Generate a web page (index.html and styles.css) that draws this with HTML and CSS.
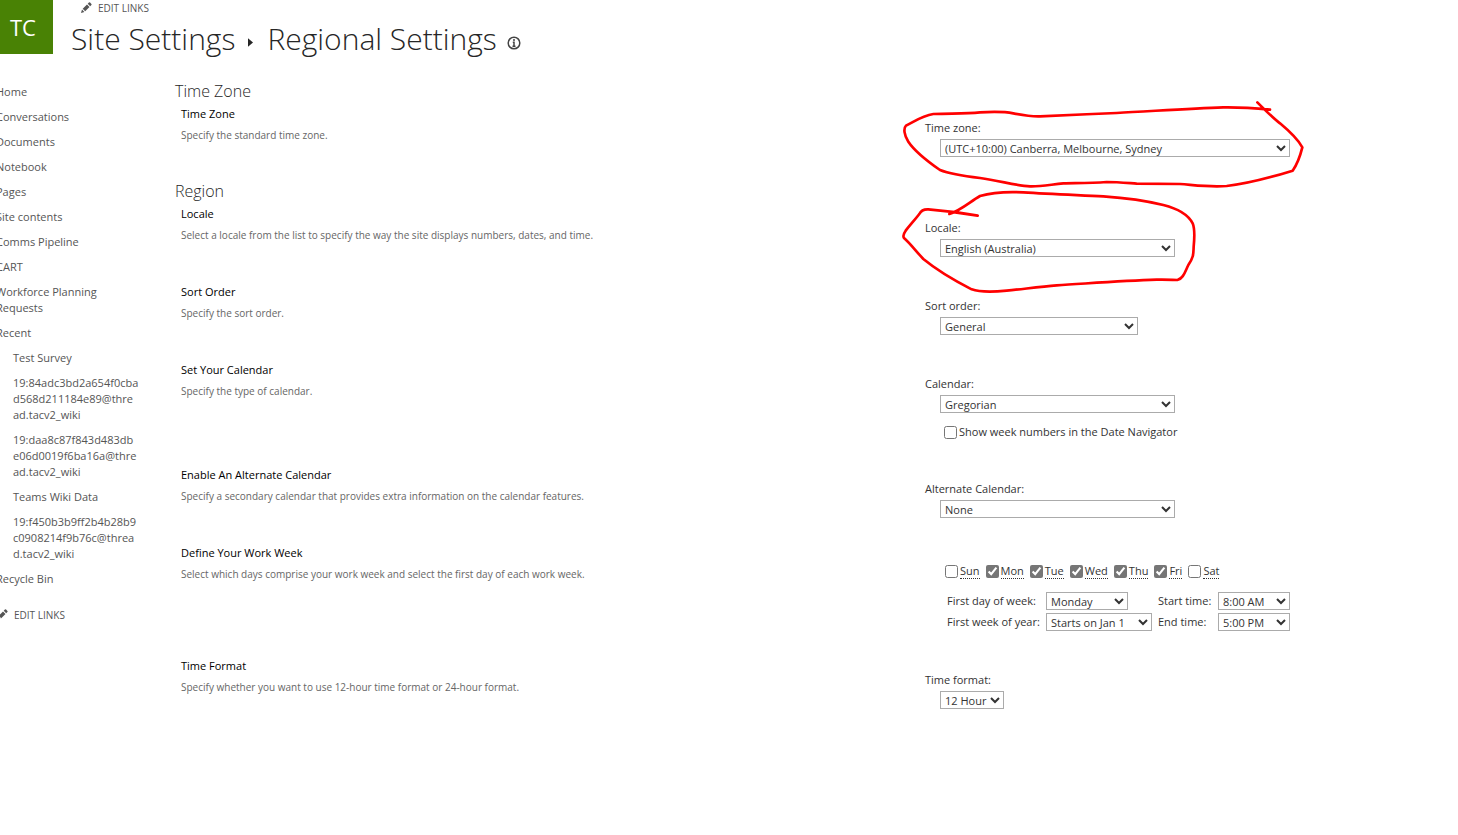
FILE: index.html
```html
<!DOCTYPE html>
<html lang="en">
<head>
    <meta charset="UTF-8">
    <meta name="viewport" content="width=device-width, initial-scale=1.0">
    <title>Regional Settings</title>
    <link rel="stylesheet" href="styles.css">
</head>
<body>
    <header class="header">
        <a class="site-logo" href="#">TC</a>
        <div class="header-text">
            <a class="edit-links" href="#">
                <svg class="pencil" viewBox="0 0 12 12"><path d="M1 11l1-3.400 2.400 2.400zM2.700 6.800L7 2.500l2.500 2.500-4.300 4.300zM7.700 1.800L8.900.6q.6-.5 1.200 0l1.300 1.300q.5.6 0 1.200l-1.200 1.200z"/></svg>
                EDIT LINKS
            </a>
            <h1 class="page-title">
                <a href="#">Site Settings</a>
                <svg class="arrow" viewBox="0 0 6 10"><path d="M0 0l6 5-6 5z"/></svg>
                <span>Regional Settings</span>
                <svg class="info" viewBox="0 0 14 14"><circle cx="7" cy="7" r="5.800"/><path d="M7 3v2M5.800 6.300H7V10M5.500 10.200h3"/></svg>
            </h1>
        </div>
    </header>

    <div class="page">
        <nav class="sidebar">
            <ul class="nav-list">
                <li><a href="#">Home</a></li>
                <li><a href="#">Conversations</a></li>
                <li><a href="#">Documents</a></li>
                <li><a href="#">Notebook</a></li>
                <li><a href="#">Pages</a></li>
                <li><a href="#">Site contents</a></li>
                <li><a href="#">Comms Pipeline</a></li>
                <li><a href="#">CART</a></li>
                <li><a href="#">Workforce Planning<br>Requests</a></li>
                <li>
                    <a href="#">Recent</a>
                    <ul class="nav-list sub-list">
                        <li><a href="#">Test Survey</a></li>
                        <li><a href="#">19:84adc3bd2a654f0cba<br>d568d211184e89@thre<br>ad.tacv2_wiki</a></li>
                        <li><a href="#">19:daa8c87f843d483db<br>e06d0019f6ba16a@thre<br>ad.tacv2_wiki</a></li>
                        <li><a href="#">Teams Wiki Data</a></li>
                        <li><a href="#">19:f450b3b9ff2b4b28b9<br>c0908214f9b76c@threa<br>d.tacv2_wiki</a></li>
                    </ul>
                </li>
                <li><a href="#">Recycle Bin</a></li>
            </ul>
            <a class="edit-links" href="#">
                <svg class="pencil" viewBox="0 0 12 12"><path d="M1 11l1-3.400 2.400 2.400zM2.700 6.800L7 2.500l2.500 2.500-4.300 4.300zM7.700 1.800L8.900.6q.6-.5 1.200 0l1.300 1.300q.5.6 0 1.200l-1.200 1.200z"/></svg>
                EDIT LINKS
            </a>
        </nav>

        <main class="settings">
            <h2 class="section-title">Time Zone</h2>
            <section class="row">
                <div class="info-cell">
                    <h3>Time Zone</h3>
                    <p>Specify the standard time zone.</p>
                </div>
                <div class="control-cell">
                    <label for="time-zone">Time zone:</label>
                    <select id="time-zone" class="select wide"><option>(UTC+10:00) Canberra, Melbourne, Sydney</option></select>
                    <svg class="mark mark-zone" viewBox="30 24 1230 285"><path d="M1102 37C1130 65 1150 85 1170 100C1200 125 1222 145 1237 172C1230 200 1220 225 1208 242C1150 260 1080 280 1010 288C960 292 920 286 870 282L740 281C700 278 680 276 650 276C600 280 560 279 520 280C480 284 450 290 420 289C380 288 330 272 270 264C220 258 180 252 150 240C110 212 75 185 55 155C42 135 40 115 48 107C80 90 100 76 130 72C200 70 230 71 270 67C320 64 345 65 370 70C400 76 420 80 450 79C540 75 600 72 680 69C780 64 900 55 1000 52C1060 51 1100 55 1140 59"/></svg>
                </div>
            </section>

            <h2 class="section-title">Region</h2>
            <section class="row">
                <div class="info-cell">
                    <h3>Locale</h3>
                    <p>Select a locale from the list to specify the way the site displays numbers, dates, and time.</p>
                </div>
                <div class="control-cell">
                    <label for="locale">Locale:</label>
                    <select id="locale" class="select medium"><option>English (Australia)</option></select>
                    <svg class="mark mark-locale" viewBox="30 294 1230 330"><path d="M263 377C200 366 140 360 115 358C100 357 93 362 88 372C70 395 60 405 47 422C40 432 38 438 42 444C60 460 75 480 100 507C140 540 200 575 245 598C270 607 310 606 350 602C400 597 450 590 500 586C600 580 700 572 800 569C830 568 850 570 862 570C880 566 885 545 895 525C912 500 910 490 911 470C914 440 914 415 908 400C895 375 860 355 820 345C760 330 700 323 640 319C560 315 480 312 400 307C340 304 300 309 270 318C240 335 215 360 178 372"/></svg>
                </div>
            </section>

            <section class="row">
                <div class="info-cell">
                    <h3>Sort Order</h3>
                    <p>Specify the sort order.</p>
                </div>
                <div class="control-cell">
                    <label for="sort-order">Sort order:</label>
                    <select id="sort-order" class="select sort"><option>General</option></select>
                </div>
            </section>

            <section class="row">
                <div class="info-cell">
                    <h3>Set Your Calendar</h3>
                    <p>Specify the type of calendar.</p>
                </div>
                <div class="control-cell">
                    <label for="calendar">Calendar:</label>
                    <select id="calendar" class="select medium"><option>Gregorian</option></select>
                    <div class="check-line">
                        <input type="checkbox" id="week-numbers">
                        <label for="week-numbers">Show week numbers in the Date Navigator</label>
                    </div>
                </div>
            </section>

            <section class="row">
                <div class="info-cell">
                    <h3>Enable An Alternate Calendar</h3>
                    <p>Specify a secondary calendar that provides extra information on the calendar features.</p>
                </div>
                <div class="control-cell">
                    <label for="alternate">Alternate Calendar:</label>
                    <select id="alternate" class="select medium"><option>None</option></select>
                </div>
            </section>

            <section class="row work-week">
                <div class="info-cell">
                    <h3>Define Your Work Week</h3>
                    <p>Select which days comprise your work week and select the first day of each work week.</p>
                </div>
                <div class="control-cell">
                    <div class="days">
                        <span><input type="checkbox" id="sun"><label for="sun">Sun</label></span>
                        <span><input type="checkbox" id="mon" checked><label for="mon">Mon</label></span>
                        <span><input type="checkbox" id="tue" checked><label for="tue">Tue</label></span>
                        <span><input type="checkbox" id="wed" checked><label for="wed">Wed</label></span>
                        <span><input type="checkbox" id="thu" checked><label for="thu">Thu</label></span>
                        <span><input type="checkbox" id="fri" checked><label for="fri">Fri</label></span>
                        <span><input type="checkbox" id="sat"><label for="sat">Sat</label></span>
                    </div>
                    <div class="week-grid">
                        <label for="first-day">First day of week:</label>
                        <select id="first-day" class="select day"><option>Monday</option></select>
                        <label for="start-time">Start time:</label>
                        <select id="start-time" class="select"><option>8:00 AM</option></select>
                        <label for="first-week">First week of year:</label>
                        <select id="first-week" class="select year"><option>Starts on Jan 1</option></select>
                        <label for="end-time">End time:</label>
                        <select id="end-time" class="select"><option>5:00 PM</option></select>
                    </div>
                </div>
            </section>

            <section class="row">
                <div class="info-cell">
                    <h3>Time Format</h3>
                    <p>Specify whether you want to use 12-hour time format or 24-hour format.</p>
                </div>
                <div class="control-cell">
                    <label for="time-format">Time format:</label>
                    <select id="time-format" class="select hour"><option>12 Hour</option></select>
                </div>
            </section>
        </main>
    </div>
</body>
</html>
```
FILE: styles.css
```css
/* Reset */
* {
    margin: 0;
    padding: 0;
    box-sizing: border-box;
}

body {
    font-family: "Segoe UI", "Open Sans", "Noto Sans", sans-serif;
    font-size: 11px;
    line-height: 16px;
    color: #333;
    background: #fff;
    overflow-x: hidden;
}

a {
    color: inherit;
    text-decoration: none;
}

/* Header */
.header {
    display: flex;
    gap: 18px;
}

.site-logo {
    width: 53px;
    height: 54px;
    padding-right: 7px;
    background: #498205;
    color: #fff;
    font-size: 22px;
    line-height: 54px;
    text-align: center;
}

.edit-links {
    display: flex;
    align-items: center;
    gap: 6px;
    font-size: 10px;
    color: #555;
}

.header .edit-links {
    padding-left: 9px;
}

.pencil {
    width: 12px;
    height: 12px;
    fill: #555;
}

.page-title {
    display: flex;
    align-items: center;
    font-size: 30px;
    font-weight: 300;
    line-height: 46px;
    color: #262626;
}

.arrow {
    width: 5px;
    height: 9px;
    margin: 6px 14px 0 13px;
    fill: #262626;
}

.info {
    width: 14px;
    height: 14px;
    margin: 8px 0 0 10px;
    fill: none;
    stroke: #444;
    stroke-width: 1.5;
}

/* Page */
.page {
    display: flex;
}

/* Left navigation */
.sidebar {
    flex: none;
    width: 179px;
    margin-left: -4px;
    padding-top: 22px;
    color: #555;
}

.nav-list {
    display: flex;
    flex-direction: column;
    gap: 9px;
    list-style: none;
}

.sub-list {
    padding: 9px 0 0 17px;
}

.sidebar .edit-links {
    margin-top: 20px;
}

/* Settings */
.settings {
    flex: 1;
    padding-top: 18px;
}

.section-title {
    font-size: 16px;
    font-weight: 300;
    line-height: 22px;
    color: #262626;
}

.row {
    display: grid;
    grid-template-columns: 1fr 533px;
    min-height: 78px;
}

.info-cell {
    padding: 4px 0 0 6px;
}

.info-cell h3 {
    font-size: 11px;
    font-weight: 400;
    color: #000;
}

.info-cell p {
    padding-top: 5px;
    font-size: 10px;
    color: #666;
}

.control-cell {
    position: relative;
    display: flex;
    flex-direction: column;
    align-items: flex-start;
    padding-top: 18px;
}

.select {
    height: 18px;
    border: 1px solid #ababab;
    background: #fff;
    color: #333;
    font-family: inherit;
    font-size: 11px;
}

.control-cell > .select {
    margin: 3px 0 0 15px;
}

.wide {
    width: 350px;
}

.medium {
    width: 235px;
}

.sort {
    width: 198px;
}

.hour {
    width: 64px;
}

.day {
    width: 82px;
}

.year {
    width: 106px;
}

input[type="checkbox"] {
    width: 13px;
    height: 13px;
    accent-color: #767676;
}

.check-line {
    display: flex;
    align-items: center;
    gap: 2px;
    padding: 11px 0 23px 19px;
}

/* Work week */
.work-week {
    min-height: 113px;
}

.work-week .control-cell {
    padding: 22px 0 0 20px;
}

.days {
    display: flex;
    gap: 6px;
}

.days span {
    display: flex;
    align-items: center;
    gap: 2px;
}

.days label {
    line-height: 15px;
    border-bottom: 1px dotted #333;
}

.week-grid {
    display: grid;
    grid-template-columns: 99px 112px 60px 72px;
    row-gap: 3px;
    align-items: center;
    padding: 13px 0 0 2px;
}

.week-grid label {
    line-height: 18px;
    white-space: nowrap;
}

/* Hand-drawn marks */
.mark {
    position: absolute;
    left: -25px;
    width: 410px;
    fill: none;
    stroke: #f00;
    stroke-width: 8;
    stroke-linecap: round;
    stroke-linejoin: round;
    pointer-events: none;
}

.mark-zone {
    top: -4px;
    height: 95px;
}

.mark-locale {
    top: -14px;
    height: 110px;
}
```
